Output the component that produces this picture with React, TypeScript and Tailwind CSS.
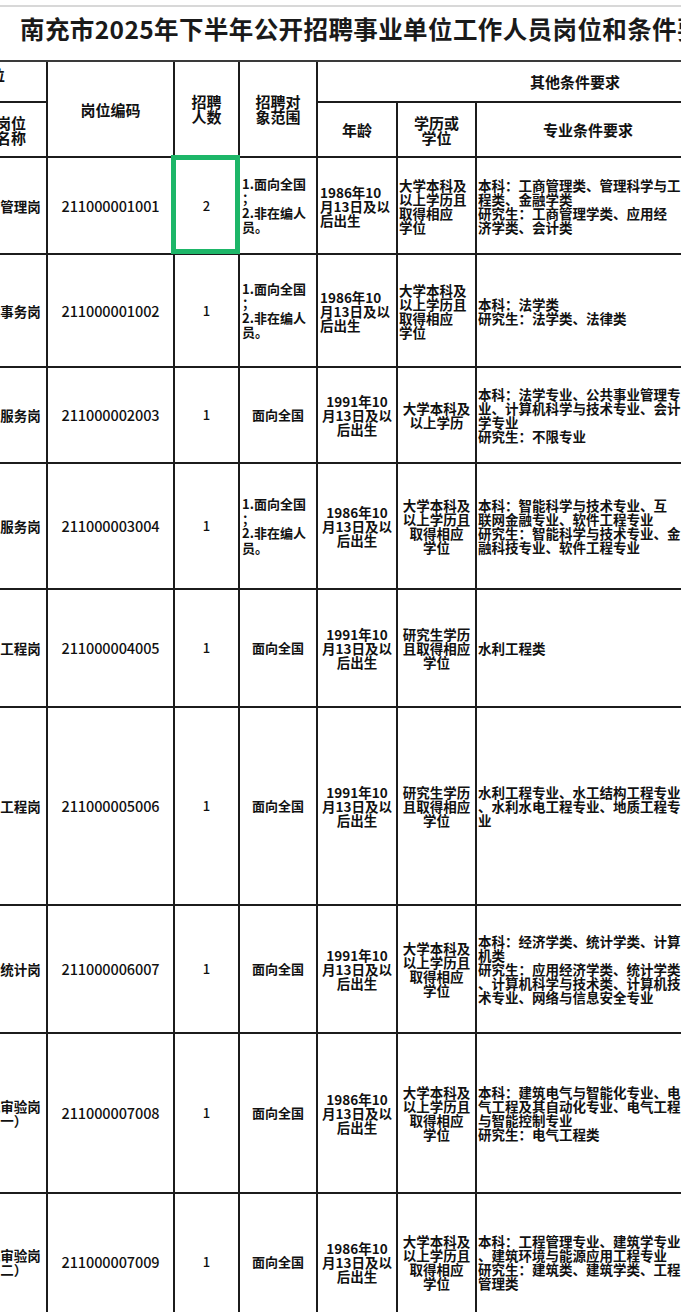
import React from "react";

type Row = {
  name: string;
  code: string;
  num: string;
  scopeList: boolean;
  age: string;
  ageLeft: boolean;
  edu: string;
  eduLeft: boolean;
  major: string[];
  h: number;
};

const AGE86 = "1986年10\n月13日及以\n后出生";
const AGE91 = "1991年10\n月13日及以\n后出生";
const EDU4 = "大学本科及\n以上学历且\n取得相应\n学位";
const EDU_GRAD = "研究生学历\n且取得相应\n学位";

const rows: Row[] = [
  {
    name: "财务管理岗",
    code: "211000001001",
    num: "2",
    scopeList: true,
    age: AGE86,
    ageLeft: true,
    edu: EDU4,
    eduLeft: true,
    major: ["本科：工商管理类、管理科学与工", "程类、金融学类", "研究生：工商管理学类、应用经", "济学类、会计类"],
    h: 97,
  },
  {
    name: "法律事务岗",
    code: "211000001002",
    num: "1",
    scopeList: true,
    age: AGE86,
    ageLeft: true,
    edu: EDU4,
    eduLeft: true,
    major: ["本科：法学类", "研究生：法学类、法律类"],
    h: 113,
  },
  {
    name: "综合服务岗",
    code: "211000002003",
    num: "1",
    scopeList: false,
    age: AGE91,
    ageLeft: false,
    edu: "大学本科及\n以上学历",
    eduLeft: false,
    major: ["本科：法学专业、公共事业管理专", "业、计算机科学与技术专业、会计", "学专业", "研究生：不限专业"],
    h: 96,
  },
  {
    name: "数技服务岗",
    code: "211000003004",
    num: "1",
    scopeList: true,
    age: AGE86,
    ageLeft: false,
    edu: EDU4,
    eduLeft: false,
    major: ["本科：智能科学与技术专业、互", "联网金融专业、软件工程专业", "研究生：智能科学与技术专业、金", "融科技专业、软件工程专业"],
    h: 126,
  },
  {
    name: "水利工程岗",
    code: "211000004005",
    num: "1",
    scopeList: false,
    age: AGE91,
    ageLeft: false,
    edu: EDU_GRAD,
    eduLeft: false,
    major: ["水利工程类"],
    h: 118,
  },
  {
    name: "水利工程岗",
    code: "211000005006",
    num: "1",
    scopeList: false,
    age: AGE91,
    ageLeft: false,
    edu: EDU_GRAD,
    eduLeft: false,
    major: ["水利工程专业、水工结构工程专业", "、水利水电工程专业、地质工程专", "业"],
    h: 198,
  },
  {
    name: "经济统计岗",
    code: "211000006007",
    num: "1",
    scopeList: false,
    age: AGE91,
    ageLeft: false,
    edu: EDU4,
    eduLeft: false,
    major: [
      "本科：经济学类、统计学类、计算",
      "机类",
      "研究生：应用经济学类、统计学类",
      "、计算机科学与技术类、计算机技",
      "术专业、网络与信息安全专业",
    ],
    h: 128,
  },
  {
    name: "图纸审验岗\n（一）",
    code: "211000007008",
    num: "1",
    scopeList: false,
    age: AGE86,
    ageLeft: false,
    edu: EDU4,
    eduLeft: false,
    major: ["本科：建筑电气与智能化专业、电", "气工程及其自动化专业、电气工程", "与智能控制专业", "研究生：电气工程类"],
    h: 160,
  },
  {
    name: "图纸审验岗\n（二）",
    code: "211000007009",
    num: "1",
    scopeList: false,
    age: AGE86,
    ageLeft: false,
    edu: EDU4,
    eduLeft: false,
    major: ["本科：工程管理专业、建筑学专业", "、建筑环境与能源应用工程专业", "研究生：建筑类、建筑学类、工程", "管理类"],
    h: 138,
  },
];

const cell = "border-r-2 border-b-2 border-[#1c1c1c] overflow-hidden";
const head = "font-bold text-[15px] leading-[15px] text-[#111]";

export default function App() {
  return (
    <div className="w-[681px] h-[1312px] overflow-hidden bg-white text-[#111] font-['Noto_Sans_CJK_SC',sans-serif]">
      <div className="h-[5px]" />
      <div className="h-[2px] w-full bg-[#d8d8d8]" />
      <div className="h-[53px] pt-[8px] pl-[20px] whitespace-nowrap text-[24.5px] leading-[28px] tracking-[0.4px] font-bold text-[#1a1a1a]">
        南充市2025年下半年公开招聘事业单位工作人员岗位和条件要求一览表
      </div>
      <div className="w-[834px] grid grid-cols-[48px_127px_65px_78px_80px_79px_224px_133px] border-t-2 border-[#3a3a3a]">
        {/* header row a */}
        <div className={`${cell} h-[41px] flex items-start justify-end pt-[5px] pr-[41px] ${head}`}>
          <span className="whitespace-nowrap">招聘岗位</span>
        </div>
        <div className={`${cell} row-span-2 flex items-center justify-center ${head}`}>岗位编码</div>
        <div className={`${cell} row-span-2 flex items-center justify-center text-center ${head}`}>
          招聘
          <br />
          人数
        </div>
        <div className={`${cell} row-span-2 flex items-center justify-center text-center ${head}`}>
          招聘对
          <br />
          象范围
        </div>
        <div className={`${cell} col-span-4 h-[41px] flex items-center justify-center ${head}`}>其他条件要求</div>
        {/* header row b */}
        <div className={`${cell} h-[55px] flex items-center justify-end pr-[20px] ${head}`}>
          <div className="text-center whitespace-nowrap leading-[15px]">
            岗位
            <br />
            名称
          </div>
        </div>
        <div className={`${cell} h-[55px] flex items-center justify-center ${head}`}>年龄</div>
        <div className={`${cell} h-[55px] flex items-center justify-center text-center ${head}`}>
          学历或
          <br />
          学位
        </div>
        <div className={`${cell} h-[55px] flex items-center justify-center ${head}`}>专业条件要求</div>
        <div className={`${cell} h-[55px] flex items-center justify-center ${head}`}>其他</div>

        {rows.map((r, i) => (
          <React.Fragment key={i}>
            <div className={`${cell} flex items-center justify-end`} style={{ height: r.h }}>
              <div className="w-[78px] shrink-0 text-center whitespace-pre-line text-[13.5px] leading-[14px] font-bold">
                {r.name}
              </div>
            </div>
            <div className={`${cell} flex items-center justify-center text-[14.5px] font-medium tracking-[-0.1px]`}>
              {r.code}
            </div>
            <div className="relative border-r-2 border-b-2 border-[#1c1c1c] flex items-center justify-center text-[13px] font-medium">
              {r.num}
              {i === 0 && (
                <div className="absolute left-[-4px] right-[-2px] top-[-3px] bottom-[-1px] border-[5px] border-[#1db668]" />
              )}
            </div>
            {r.scopeList ? (
              <div className={`${cell} flex items-center pl-[2px] text-[13px] leading-[14.5px] font-bold`}>
                <div className="whitespace-pre-line">{"1.面向全国\n；\n2.非在编人\n员。"}</div>
              </div>
            ) : (
              <div className={`${cell} flex items-center justify-center text-[13px] font-bold`}>面向全国</div>
            )}
            <div
              className={`${cell} flex items-center ${r.ageLeft ? "justify-start pl-[2px] text-left" : "justify-center text-center"} text-[13.5px] leading-[14px] font-bold`}
            >
              <div className="whitespace-pre-line">{r.age}</div>
            </div>
            <div
              className={`${cell} flex items-center ${r.eduLeft ? "justify-start pl-[1px] text-left" : "justify-center text-center"} text-[13.5px] leading-[14px] font-bold`}
            >
              <div className="whitespace-pre-line">{r.edu}</div>
            </div>
            <div className={`${cell} flex items-center pl-[1px] text-[13.5px] leading-[14px] font-bold`}>
              <div className="whitespace-nowrap">
                {r.major.map((m, j) => (
                  <div key={j}>{m}</div>
                ))}
              </div>
            </div>
            <div className={cell} />
          </React.Fragment>
        ))}
      </div>
    </div>
  );
}
